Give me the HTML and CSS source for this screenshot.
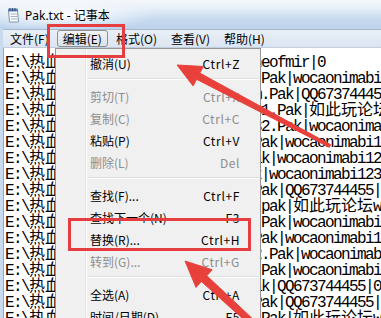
FILE: index.html
```html
<!DOCTYPE html>
<html lang="zh-CN">
<head>
    <meta charset="UTF-8">
    <meta name="viewport" content="width=device-width, initial-scale=1.0">
    <title>Pak.txt - 记事本</title>

    <link rel="stylesheet" href="styles.css">
</head>
<body>
    <div class="window">
        <div class="titlebar">
            <svg class="app-icon" viewBox="0 0 16 16">
                <path d="M3.5 3h9l1 12h-9z" fill="#fcfdfe" stroke="#7f95ad"/>
                <path d="M5.5 7h6.5M5.7 9.5h6.6M5.9 12h6.6" stroke="#a3b1c1"/>
                <rect x="3" y="1.5" width="10" height="3" rx="1" fill="#5a86bd"/>
                <path d="M5 1v3M7.5 1v3M10 1v3" stroke="#2f4f78"/>
            </svg>
            <span class="title">Pak.txt - 记事本</span>
        </div>
        <nav class="menubar">
            <span class="menu-item">文件(F)</span>
            <span class="menu-item active">编辑(E)</span>
            <span class="menu-item">格式(O)</span>
            <span class="menu-item">查看(V)</span>
            <span class="menu-item">帮助(H)</span>
        </nav>
        <div class="editor">
            <div class="line">E:\<span class="cj">热血传奇</span>\Data\Interface\Geotheofmir|0</div>
            <div class="line">E:\<span class="cj">热血传奇</span>\Data\Prguse\Weapon3.Pak|wocaonimabi123|0</div>
            <div class="line">E:\<span class="cj">热血传奇</span>\Data\Prguse\Hum_Item.Pak|QQ673744455|0</div>
            <div class="line">E:\<span class="cj">热血传奇</span>\Data\Objects\Mon_Nd31.Pak|<span class="cj">如此玩论坛</span>www|0</div>
            <div class="line">E:\<span class="cj">热血传奇</span>\Data\Objects\Mon_Nd32.Pak|wocaonimabi123|0</div>
            <div class="line">E:\<span class="cj">热血传奇</span>\Data\Prguse\Effect.Pak|wocaonimabi123|0</div>
            <div class="line">E:\<span class="cj">热血传奇</span>\Data\Prguse\Magic.Pak|wocaonimabi123|0</div>
            <div class="line">E:\<span class="cj">热血传奇</span>\Data\Prguse\Npc2.Pak|wocaonimabi123|0</div>
            <div class="line">E:\<span class="cj">热血传奇</span>\Data\Prguse\Items2.Pak|QQ673744455|0</div>
            <div class="line">E:\<span class="cj">热血传奇</span>\Data\Prguse\Tiles30.pak|<span class="cj">如此玩论坛</span>www|0</div>
            <div class="line">E:\<span class="cj">热血传奇</span>\Data\Prguse\SmTiles.Pak|wocaonimabi123|0</div>
            <div class="line">E:\<span class="cj">热血传奇</span>\Data\Prguse\Hairs2.Pak|wocaonimabi123|0</div>
            <div class="line">E:\<span class="cj">热血传奇</span>\Data\Prguse\Mon_Nd22.Pak|wocaonimabi123|0</div>
            <div class="line">E:\<span class="cj">热血传奇</span>\Data\Prguse\Mon-22b.Pak|wocaonimabi123|0</div>
            <div class="line">E:\<span class="cj">热血传奇</span>\Data\Prguse\HumEf.Pak|QQ673744455|0</div>
            <div class="line">E:\<span class="cj">热血传奇</span>\Data\Prguse\Hairs3.Pak|QQ673744455|0</div>
            <div class="line">E:\<span class="cj">热血传奇</span>\Data\Prguse\Weapon4.Pak|<span class="cj">如此玩论坛</span>www|0</div>
        </div>
    </div>

    <ul class="dropdown">
        <li class="item"><span>撤消(U)</span><span class="key">Ctrl+Z</span></li>
        <li class="sep"></li>
        <li class="item off"><span>剪切(T)</span><span class="key">Ctrl+X</span></li>
        <li class="item off"><span>复制(C)</span><span class="key">Ctrl+C</span></li>
        <li class="item"><span>粘贴(P)</span><span class="key">Ctrl+V</span></li>
        <li class="item off"><span>删除(L)</span><span class="key">Del</span></li>
        <li class="sep"></li>
        <li class="item"><span>查找(F)...</span><span class="key">Ctrl+F</span></li>
        <li class="item"><span>查找下一个(N)</span><span class="key">F3</span></li>
        <li class="item"><span>替换(R)...</span><span class="key">Ctrl+H</span></li>
        <li class="item off"><span>转到(G)...</span><span class="key">Ctrl+G</span></li>
        <li class="sep"></li>
        <li class="item"><span>全选(A)</span><span class="key">Ctrl+A</span></li>
        <li class="item"><span>时间/日期(D)</span><span class="key">F5</span></li>
    </ul>

    <div class="mark mark-edit"></div>
    <div class="mark mark-replace"></div>

    <svg class="arrows" viewBox="0 0 381 318">
        <polygon points="177,65 203.4,66.5 199.8,73.1 330.7,144.7 329.3,147.3 196.6,79.3 193.1,85.9"/>
        <polygon points="185,261 212.2,269.8 206.8,275.7 268,333.3 264,337.7 201.4,281.5 196,287.4"/>
    </svg>
</body>
</html>
```

FILE: styles.css
```css
body {
    margin: 0;
    width: 381px;
    height: 318px;
    overflow: hidden;
    background: #c8daee;
    font-family: "Noto Sans CJK SC", sans-serif;
    font-size: 12px;
    color: #000;
}
.window {
    height: 318px;
    display: flex;
    flex-direction: column;
}
.titlebar {
    height: 29px;
    flex: none;
    display: flex;
    align-items: center;
    gap: 4px;
    padding-left: 5px;
    background:
        radial-gradient(ellipse 95px 16px at 62px 15px, rgba(255,255,255,0.95), rgba(255,255,255,0)),
        linear-gradient(#f5f8fb 0, #e6eef7 30%, #c6daf0 65%, #bcd3ec 100%);
}
.app-icon {
    width: 16px;
    height: 16px;
}
.title {
    font-family: "Noto Sans", "Noto Sans CJK SC", sans-serif;
    font-size: 12px;
}
.menubar {
    flex: none;
    margin-left: 3px;
    height: 17px;
    display: flex;
    align-items: center;
    border-top: 1px solid #a7b7ca;
    border-bottom: 1px solid #c2cedc;
    background: linear-gradient(#e9eff7, #dbe5f1);
}
.menu-item {
    height: 15px;
    line-height: 15px;
    padding: 0 5px;
    margin: 0 1px;
    border: 1px solid transparent;
    border-radius: 3px;
}
.menu-item.active {
    border-color: #8c9096;
    background: linear-gradient(#f1f3f6, #dde2e9);
}
.editor {
    flex: 1;
    min-height: 0;
    margin-left: 3px;
    padding: 7px 0 0 1px;
    background: #fff;
    border-left: 1px solid #9ba7b5;
    overflow: hidden;
    font-family: "Liberation Mono", monospace;
    font-size: 16px;
    line-height: 16px;
    letter-spacing: -1.6px;
}
.line {
    height: 16px;
    white-space: pre;
}
.cj {
    font-family: "Noto Sans CJK SC", sans-serif;
    letter-spacing: 0;
    line-height: 10px;
}
.dropdown {
    position: absolute;
    left: 55px;
    top: 48px;
    width: 204px;
    height: 265px;
    margin: 0;
    padding: 4px 0 0;
    overflow: hidden;
    list-style: none;
    border: 1px solid #979797;
    border-bottom: 0;
    background: linear-gradient(to right, #f1f1f1 0, #f1f1f1 29px, #e2e3e3 29px, #e2e3e3 30px, #fff 30px, #fff 31px, #f0f0f0 31px);
}
.item {
    display: flex;
    justify-content: space-between;
    height: 22px;
    line-height: 22px;
    padding: 0 20px 0 34px;
}
.item .key {
    letter-spacing: 0.6px;
}
.off {
    color: #8d8d8d;
}
.sep {
    height: 8px;
}
.sep::after {
    content: "";
    display: block;
    margin: 3px 1px 0 31px;
    border-top: 1px solid #e0e0e0;
    border-bottom: 1px solid #fff;
}
.mark {
    position: absolute;
    box-sizing: border-box;
    border: 3px solid #e63e40;
}
.mark-edit {
    left: 47px;
    top: 24px;
    width: 78px;
    height: 34px;
}
.mark-replace {
    left: 68px;
    top: 218px;
    width: 183px;
    height: 33px;
}
.arrows {
    position: absolute;
    left: 0;
    top: 0;
    width: 381px;
    height: 318px;
    fill: #e8413b;
    stroke: #e8413b;
    stroke-width: 1;
    stroke-linejoin: round;
}
```
